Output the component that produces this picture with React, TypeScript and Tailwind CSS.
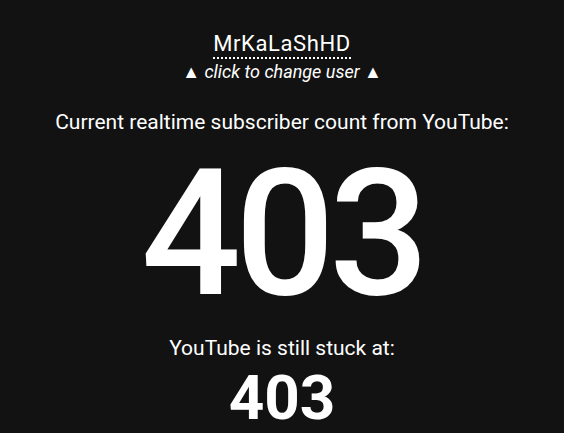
import React from "react";

export default function App() {
  return (
    <div
      className="w-[564px] h-[433px] overflow-hidden bg-[#121212] text-white flex flex-col items-center"
      style={{ fontFamily: "Roboto, 'Noto Sans', sans-serif" }}
    >
      <div className="mt-[30px] text-[22px] leading-[27px] tracking-[0.6px] border-b-2 border-dotted border-white">
        MrKaLaShHD
      </div>
      <div className="text-[18px] leading-[26px] italic">▲ click to change user ▲</div>
      <div className="mt-[23px] text-[21px] leading-[28px]">
        Current realtime subscriber count from YouTube:
      </div>
      <div className="mt-[3px] text-[176px] leading-[190px] font-medium tracking-[-6px]">403</div>
      <div className="mt-[6px] text-[21px] leading-[26px]">YouTube is still stuck at:</div>
      <div className="mt-[1px] text-[62px] leading-[72px] font-bold">403</div>
    </div>
  );
}
